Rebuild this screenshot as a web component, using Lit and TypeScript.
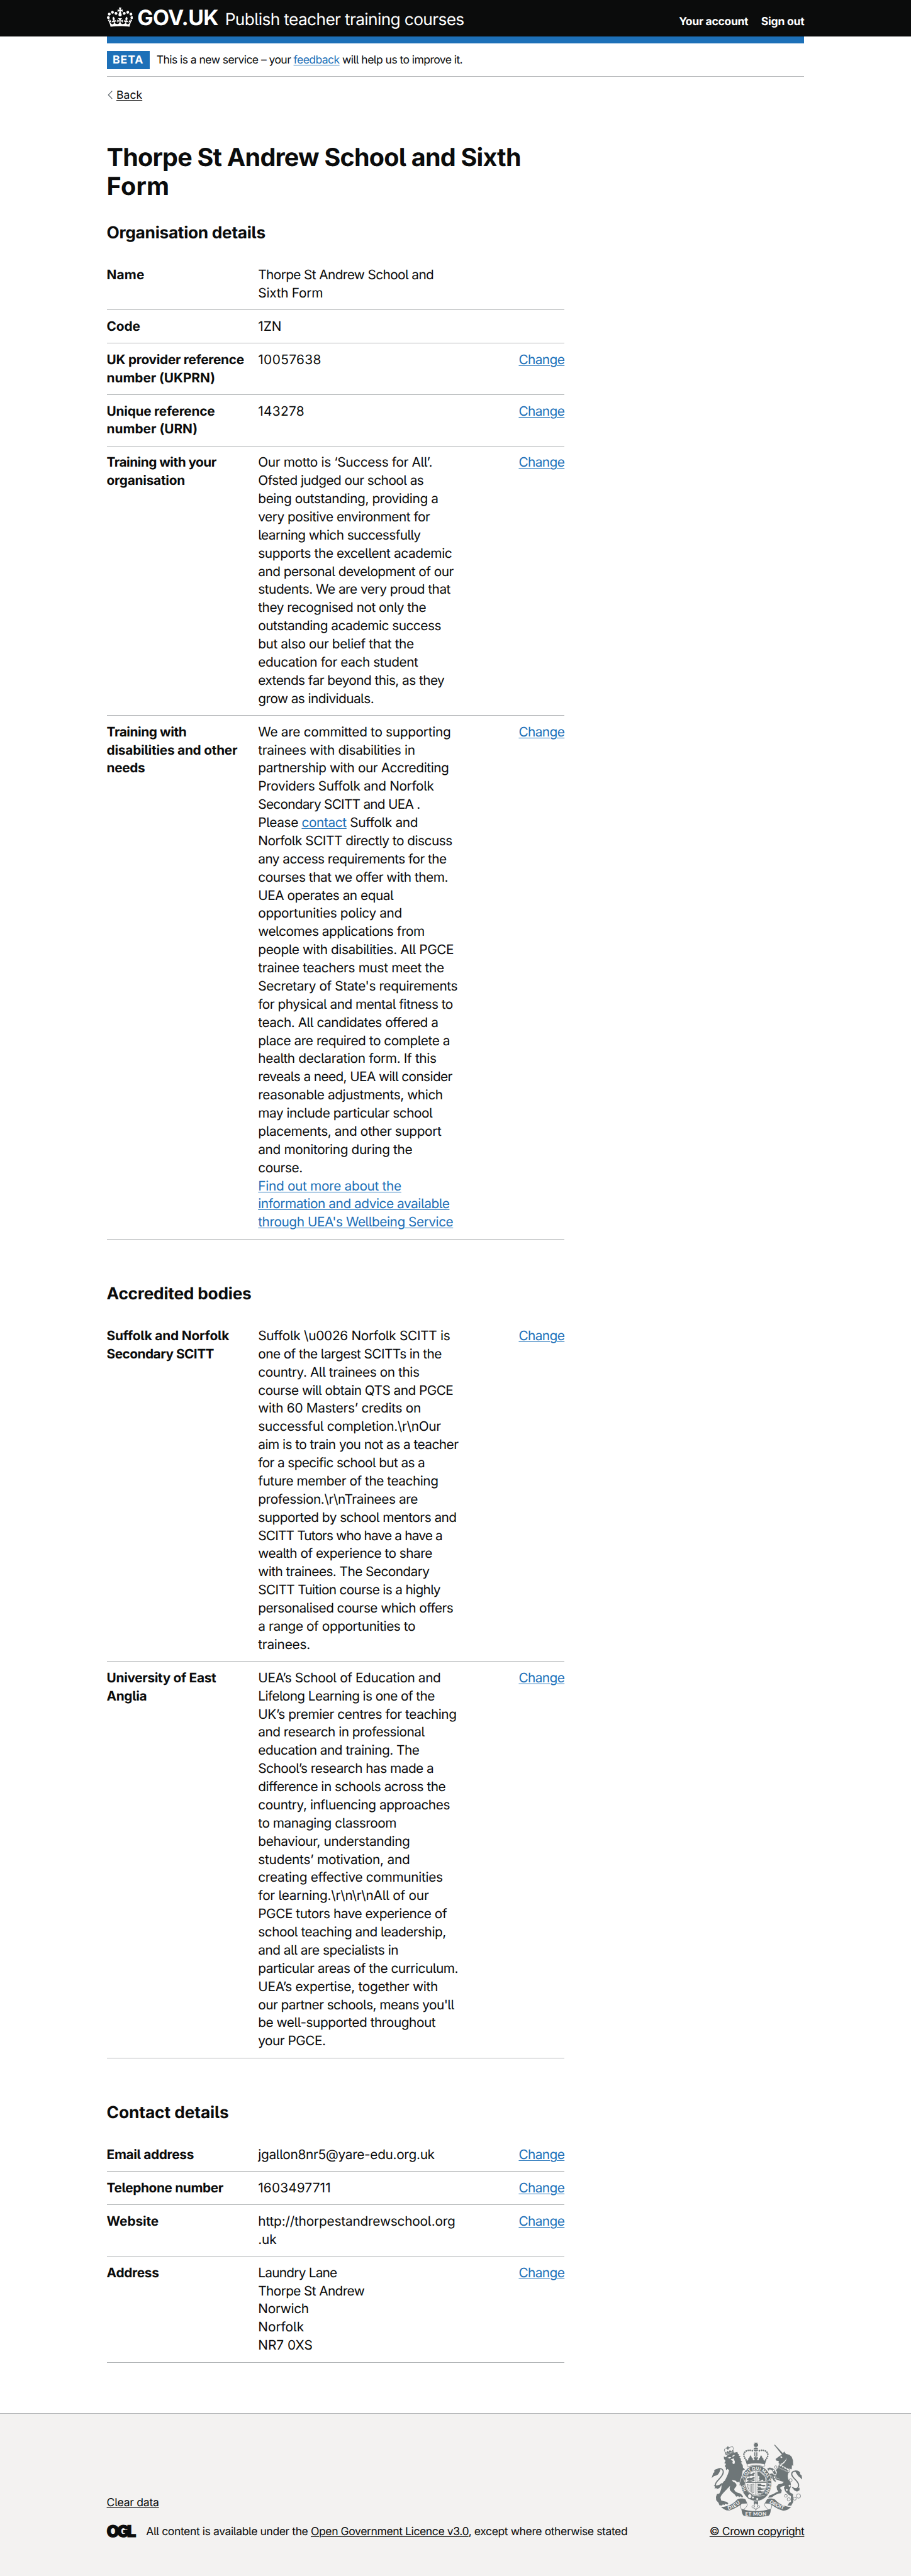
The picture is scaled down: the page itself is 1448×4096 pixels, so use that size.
import { LitElement, html, svg, css, unsafeCSS, TemplateResult } from "lit";
import { customElement, property, query } from "lit/decorators.js";

/** Pixels per layout unit: the page is designed on a 960-unit container. */
const SCALE = 1.155;
const u = (n: number) => unsafeCSS(`${+(n * SCALE).toFixed(3)}px`);

/** One line of text, tracked so that it spans the given number of units. */
@customElement("fit-text")
export class FitText extends LitElement {
  @property({ type: Number }) span = 0;
  @query("span") inner!: HTMLSpanElement;

  static styles = css`
    :host {
      display: block;
      white-space: pre;
    }
    .line {
      display: inline-block;
      vertical-align: top;
      white-space: pre;
    }
  `;

  firstUpdated() {
    const n = (this.textContent ?? "").length;
    const natural = this.inner.getBoundingClientRect().width;
    if (n > 1 && this.span) {
      const gap = ((this.span + 1.4) * SCALE - natural) / n;
      this.inner.style.letterSpacing = `${gap.toFixed(4)}px`;
    }
  }

  render() {
    return html`<span class="line"><slot></slot></span>`;
  }
}

type Line = [string | TemplateResult, number];
interface Row {
  key: Line[];
  value: Line[];
  change?: boolean;
}

const organisation: Row[] = [
  { key: [["Name", 50.4]], value: [["Thorpe St Andrew School and", 240.1], ["Sixth Form", 87.7]] },
  { key: [["Code", 44.5]], value: [["1ZN", 30.6]] },
  {
    key: [["UK provider reference", 187.6], ["number (UKPRN)", 147.8]],
    value: [["10057638", 85.6]],
    change: true,
  },
  {
    key: [["Unique reference", 147.3], ["number (URN)", 123.8]],
    value: [["143278", 62.5]],
    change: true,
  },
  {
    key: [["Training with your", 149.4], ["organisation", 106.2]],
    value: [
      ["Our motto is ‘Success for All’.", 238.4],
      ["Ofsted judged our school as", 226.3],
      ["being outstanding, providing a", 246.4],
      ["very positive environment for", 235.1],
      ["learning which successfully", 222.1],
      ["supports the excellent academic", 265.3],
      ["and personal development of our", 267.4],
      ["students. We are very proud that", 263.2],
      ["they recognised not only the", 229.6],
      ["outstanding academic success", 250.2],
      ["but also our belief that the", 212.8],
      ["education for each student", 218.7],
      ["extends far beyond this, as they", 254.8],
      ["grow as individuals.", 157.8],
    ],
    change: true,
  },
  {
    key: [["Training with", 108.3], ["disabilities and other", 178.4], ["needs", 51.2]],
    value: [
      ["We are committed to supporting", 263.6],
      ["trainees with disabilities in", 214.5],
      ["partnership with our Accrediting", 261.1],
      ["Providers Suffolk and Norfolk", 240.5],
      ["Secondary SCITT and UEA .", 221.2],
      [html`Please <a class="link">contact</a> Suffolk and`, 218.3],
      ["Norfolk SCITT directly to discuss", 265.7],
      ["any access requirements for the", 257.7],
      ["courses that we offer with them.", 259.8],
      ["UEA operates an equal", 184.7],
      ["opportunities policy and", 196.5],
      ["welcomes applications from", 227.5],
      ["people with disabilities. All PGCE", 267.8],
      ["trainee teachers must meet the", 254.4],
      ["Secretary of State's requirements", 272.9],
      ["for physical and mental fitness to", 266.6],
      ["teach. All candidates offered a", 246.4],
      ["place are required to complete a", 262.4],
      ["health declaration form. If this", 243.9],
      ["reveals a need, UEA will consider", 265.7],
      ["reasonable adjustments, which", 252.7],
      ["may include particular school", 238.4],
      ["placements, and other support", 250.6],
      ["and monitoring during the", 210.7],
      ["course.", 59.6],
      [html`<a class="link">Find out more about the</a>`, 195.6],
      [html`<a class="link">information and advice available</a>`, 261.9],
      [html`<a class="link">through UEA's Wellbeing Service</a>`, 267],
    ],
    change: true,
  },
];

const accredited: Row[] = [
  {
    key: [["Suffolk and Norfolk", 167.1], ["Secondary SCITT", 146.1]],
    value: [
      ["Suffolk \\u0026 Norfolk SCITT is", 262.8],
      ["one of the largest SCITTs in the", 251],
      ["country. All trainees on this", 220.4],
      ["course will obtain QTS and PGCE", 267],
      ["with 60 Masters’ credits on", 222.5],
      ["successful completion.\\r\\nOur", 250.2],
      ["aim is to train you not as a teacher", 274.1],
      ["for a specific school but as a", 227.9],
      ["future member of the teaching", 246.4],
      ["profession.\\r\\nTrainees are", 218.3],
      ["supported by school mentors and", 271.6],
      ["SCITT Tutors who have a have a", 251.9],
      ["wealth of experience to share", 238],
      ["with trainees. The Secondary", 234.2],
      ["SCITT Tuition course is a highly", 249.3],
      ["personalised course which offers", 267],
      ["a range of opportunities to", 214.9],
      ["trainees.", 70.1],
    ],
    change: true,
  },
  {
    key: [["University of East", 149], ["Anglia", 53.7]],
    value: [
      ["UEA’s School of Education and", 249.8],
      ["Lifelong Learning is one of the", 241.4],
      ["UK’s premier centres for teaching", 271.6],
      ["and research in professional", 227.5],
      ["education and training. The", 220.4],
      ["School’s research has made a", 240.1],
      ["difference in schools across the", 256.5],
      ["country, influencing approaches", 262.4],
      ["to managing classroom", 188.9],
      ["behaviour, understanding", 207.4],
      ["students’ motivation, and", 207.4],
      ["creating effective communities", 252.7],
      ["for learning.\\r\\n\\r\\nAll of our", 233.4],
      ["PGCE tutors have experience of", 258.2],
      ["school teaching and leadership,", 256.9],
      ["and all are specialists in", 191.4],
      ["particular areas of the curriculum.", 273.7],
      ["UEA’s expertise, together with", 246],
      ["our partner schools, means you'll", 268.2],
      ["be well-supported throughout", 242.6],
      ["your PGCE.", 91.5],
    ],
    change: true,
  },
];

const contact: Row[] = [
  { key: [["Email address", 118.4]], value: [["jgallon8nr5@yare-edu.org.uk", 241.4]], change: true },
  { key: [["Telephone number", 159.1]], value: [["1603497711", 98.6]], change: true },
  {
    key: [["Website", 70.1]],
    value: [["http://thorpestandrewschool.org", 269.9], [".uk", 23.9]],
    change: true,
  },
  {
    key: [["Address", 70.5]],
    value: [
      ["Laundry Lane", 107],
      ["Thorpe St Andrew", 144.8],
      ["Norwich", 68.4],
      ["Norfolk", 61.7],
      ["NR7 0XS", 73.5],
    ],
    change: true,
  },
];

const crown = svg`<path fill="currentColor" fill-rule="evenodd" d="M25 30.2c3.5 1.5 7.7-.2 9.1-3.7 1.5-3.6-.2-7.8-3.9-9.2-3.6-1.4-7.6.3-9.1 3.9-1.4 3.5.3 7.5 3.9 9zM9 39.5c3.6 1.5 7.8-.2 9.2-3.7 1.5-3.6-.2-7.8-3.9-9.1-3.6-1.5-7.6.2-9.1 3.8-1.4 3.5.3 7.5 3.8 9zM4.4 57.2c3.5 1.5 7.7-.2 9.1-3.8 1.5-3.6-.2-7.7-3.9-9.1-3.5-1.5-7.6.3-9.1 3.8-1.4 3.5.3 7.6 3.9 9.1zm38.3-21.4c3.5 1.5 7.7-.2 9.1-3.8 1.5-3.6-.2-7.7-3.9-9.1-3.6-1.5-7.6.3-9.1 3.8-1.3 3.6.4 7.7 3.9 9.1zm64.4-5.6c-3.6 1.5-7.8-.2-9.1-3.7-1.5-3.6.2-7.8 3.8-9.2 3.6-1.4 7.7.3 9.2 3.9 1.3 3.5-.4 7.5-3.9 9zm15.9 9.3c-3.6 1.5-7.7-.2-9.1-3.7-1.5-3.6.2-7.8 3.7-9.1 3.6-1.5 7.7.2 9.2 3.8 1.5 3.5-.3 7.5-3.8 9zm4.7 17.7c-3.6 1.5-7.8-.2-9.2-3.8-1.5-3.6.2-7.7 3.9-9.1 3.6-1.5 7.7.3 9.2 3.8 1.3 3.5-.4 7.6-3.9 9.1zM89.3 35.8c-3.6 1.5-7.8-.2-9.2-3.8-1.4-3.6.2-7.7 3.9-9.1 3.6-1.5 7.7.3 9.2 3.8 1.4 3.6-.3 7.7-3.9 9.1zM69.7 17.7l8.9 4.7V9.3l-8.9 2.8c-.2-.3-.5-.6-.9-.9L72.4 0H59.6l3.5 11.2c-.3.3-.6.5-.9.9l-8.8-2.8v13.1l8.8-4.7c.3.3.6.7.9.9l-5 15.4v.1c-.2.8-.4 1.6-.4 2.4 0 4.1 3.1 7.5 7 8.1h.2c.3 0 .7.1 1 .1.4 0 .7 0 1-.1h.2c4-.6 7.1-4.1 7.1-8.1 0-.8-.1-1.7-.4-2.4V34l-5.1-15.4c.4-.2.7-.6 1-.9zM66 92.8c16.9 0 32.8 1.1 47.1 3.2 4-16.9 8.9-26.7 14-33.5l-9.6-3.4c1 4.9 1.1 7.2 0 10.2-1.5-1.4-3-4.3-4.2-8.7L108.6 76c2.8-2 5-3.2 7.5-3.3-4.4 9.4-10 11.9-13.6 11.2-4.3-.8-6.3-4.6-5.6-7.9 1-4.7 5.7-5.9 8-.5 4.3-8.7-3-11.4-7.6-8.8 7.1-7.2 7.9-13.5 2.1-21.1-8 6.1-8.1 12.3-4.5 20.8-4.7-5.4-12.1-2.5-9.5 6.2 3.4-5.2 7.9-2 7.2 3.1-.6 4.3-6.4 7.8-13.5 7.2-10.3-.9-10.9-8-11.2-13.8 2.5-.5 7.1 1.8 11 7.3L80.2 60c-4.1 4.4-8 5.3-12.3 5.4 1.4-4.4 8-11.6 8-11.6H55.5s6.4 7.2 7.9 11.6c-4.2-.1-8-1-12.3-5.4l1.4 16.4c3.9-5.5 8.5-7.7 10.9-7.3-.3 5.8-.9 12.8-11.1 13.8-7.2.6-12.9-2.9-13.5-7.2-.7-5 3.8-8.3 7.1-3.1 2.7-8.7-4.6-11.6-9.4-6.2 3.7-8.5 3.6-14.7-4.6-20.8-5.8 7.6-5 13.9 2.2 21.1-4.7-2.6-11.9.1-7.7 8.8 2.3-5.5 7.1-4.2 8.1.5.7 3.3-1.3 7.1-5.7 7.9-3.5.7-9-1.8-13.5-11.2 2.5.1 4.7 1.3 7.5 3.3l-4.7-15.4c-1.2 4.4-2.7 7.2-4.3 8.7-1.1-3-.9-5.3 0-10.2l-9.5 3.4c5 6.9 9.9 16.7 14 33.5 14.8-2.1 30.8-3.2 47.7-3.2z"/>`;

/** Royal coat of arms: lion, garter and shield, unicorn, motto ribbon. */
@customElement("royal-arms")
export class RoyalArms extends LitElement {
  static styles = css`
    :host {
      display: block;
      color: #6e7678;
    }
    .arms {
      display: block;
      width: 100%;
      height: 100%;
    }
    .f { fill: currentColor; }
    .b { fill: #f3f2f1; }
    .s { fill: none; stroke: currentColor; }
    .path { fill: none; stroke: none; }
    .o { fill: #f3f2f1; stroke: currentColor; stroke-width: 4; }
    .e { fill: currentColor; stroke: #f3f2f1; stroke-width: 4; }
    .bs { fill: none; stroke: #f3f2f1; }
    .dots { fill: none; stroke: currentColor; stroke-linecap: round; }
    .motto {
      fill: #f3f2f1;
      font-family: Lato, "Liberation Sans", sans-serif;
      font-weight: 900;
      font-size: 40px;
    }
    .ring { font-size: 33px; }
  `;

  render() {
    return html`<svg class="arms" viewBox="162 122 718 590" role="img">
      <!-- ribbon -->
      <path class="f" d="M236 632 C300 628 336 604 362 574 C384 562 412 562 430 572 L443 600 C418 602 404 606 392 616 C366 632 340 646 312 656 C284 666 262 654 236 632Z"/>
      <path class="f" d="M792 632 C730 628 692 604 666 574 C644 562 616 562 600 572 L584 600 C610 602 626 606 636 616 C662 634 690 650 718 658 C746 666 768 654 792 632Z"/>
      <path class="o" d="M400 652 C384 632 388 610 404 604 L440 602 C450 616 440 628 422 646 L418 655Z"/>
      <path class="o" d="M628 652 C642 632 640 610 624 604 L584 602 C576 616 584 628 602 644 L610 655Z"/>
      <path class="f" d="M398 646 C470 670 556 670 630 646 C630 676 624 692 612 702 C550 714 476 714 418 702 C406 692 400 676 398 646Z"/>
      <path id="dieu" class="path" d="M296 656 Q352 636 396 596"/>
      <path id="droit" class="path" d="M618 596 Q670 634 746 658"/>
      <text class="motto"><textPath href="#dieu" textLength="108">DIEU</textPath></text>
      <text class="motto"><textPath href="#droit" textLength="126">DROIT</textPath></text>
      <text class="motto" x="428" y="700" textLength="168">ET MON</text>
      <!-- pendant lily -->
      <path class="f" d="M496 586H530V612H496Z"/>
      <path class="o" d="M512 600 C526 612 526 622 521 632 C530 618 544 618 543 632 C540 642 532 640 530 636 C530 648 522 644 519 642 L512 660 L505 642 C502 644 494 648 494 636 C492 640 484 642 481 632 C480 618 494 618 503 632 C498 622 498 612 512 600Z"/>
      <!-- lion tail -->
      <path class="s" stroke-width="9" d="M246 444 C206 476 184 476 194 446 C206 416 250 396 254 356 C254 326 226 320 206 336"/>
      <path class="f" d="M232 332 C212 324 192 330 182 342 L184 356 L174 362 L162 402 L180 388 L204 380 C218 370 226 356 232 332Z M178 458 L200 462 L226 456 L248 450 L222 482 L200 492 L204 482 L184 484 L190 474Z"/>
      <!-- lion -->
      <path class="f" d="M258 232 L276 238 L284 224 L300 214 L330 203 L366 196 L370 210 L380 216 L376 224 L392 232 L382 240 L396 252 L390 258 L404 276 L394 280 L408 300 L410 320 L426 334 L408 344 L403 372 L398 392 L412 408 L426 440 L422 466 L408 456 L396 464 L382 458 L384 444 L376 432 L364 436 L352 424 L322 416 L330 430 C350 438 362 450 358 466 L340 490 L346 506 L366 518 L388 524 L402 536 L412 552 L402 556 L386 546 L382 556 L372 546 L356 550 L346 534 L324 516 L308 500 L304 484 L308 464 C298 476 280 494 262 512 C246 528 234 544 232 558 L238 580 L258 586 L280 590 L294 602 L288 612 L266 606 L266 616 L250 612 L244 620 L224 618 L216 598 L198 578 L196 552 L204 530 L222 526 C234 504 240 486 240 468 C242 448 256 430 266 424 C276 404 290 380 300 340 L288 330 L276 340 L274 318 L266 308 L276 290 L262 284 L272 266 L260 250Z"/>
      <path class="b" d="M286 242 L306 236 L318 238 L304 248Z M322 228 L342 218 L344 226 L330 234Z M312 254 L338 246 L340 258 L346 272 L344 288 L334 292 L326 284 L330 268 L322 262Z"/>
      <!-- lion's crown -->
      <path class="f" d="M266 196 L280 200 L286 186 L296 196 L306 180 L318 190 L332 176 L338 200 L274 220Z"/>
      <path class="bs" stroke-width="3" d="M276 210 L334 194"/>
      <path class="dots" stroke-width="7" stroke-dasharray="0 9" d="M266 192 C256 170 276 158 288 170 C296 160 330 146 334 162 L334 174"/>
      <path class="f" d="M286 152h9v8h7v8h-7v9h-9v-9h-7v-8h7Z"/>
      <!-- unicorn -->
      <path class="f" d="M655 138 L664 140 L732 212 L722 222Z"/>
      <path class="f" d="M668 252 L700 228 L722 216 L736 192 L750 210 L778 218 L796 234 L806 262 L808 306 L798 300 L796 334 L786 330 L742 320 L712 302 L736 284 L752 262 L756 240 L746 262 L722 284 L706 292 L692 284 L694 268 L674 264Z"/>
      <path class="b" d="M704 234 l14 -4 l4 10 l-10 4Z"/>
      <path class="o" d="M698 290 L784 336 L774 360 L690 318Z"/>
      <path class="f" d="M700 298 l8 14 l8 -8 l10 18 l8 -8 l10 18 l8 -8 l10 18 l8 -6 l0 16 L692 316Z"/>
      <path class="f" d="M688 320 L770 360 L764 386 L768 410 L788 440 L790 470 L778 500 L782 516 L806 530 L808 592 L792 622 L762 620 L776 598 L790 590 L790 546 L768 532 L744 506 L734 480 L744 464 C726 466 708 472 704 482 L718 500 L712 522 L690 526 L662 538 L638 556 L608 558 L620 540 L650 530 L666 520 L690 508 L680 494 L676 470 L690 452 L720 446 L734 434 L708 426 L664 410 L640 408 L618 388 L618 368 L642 368 L672 378 L680 354 L670 340Z"/>
      <path class="bs" stroke-width="3" d="M664 412 L672 400 L700 412"/>
      <!-- unicorn tail -->
      <path class="s" stroke-width="9" d="M800 476 C832 500 856 480 850 450 C836 414 796 400 796 370 C798 346 822 344 842 352"/>
      <path class="f" d="M820 344 C840 338 856 346 864 362 L860 370 L874 380 L880 414 L860 396 C844 386 838 372 820 344Z M806 484 L836 486 L858 478 L858 500 L838 510 L816 500Z"/>
      <!-- garter and shield -->
      <ellipse class="e" cx="515" cy="443" rx="122" ry="142"/>
      <ellipse class="b" cx="514" cy="440" rx="89" ry="102"/>
      <ellipse class="s" stroke-width="4" cx="514" cy="440" rx="85" ry="98"/>
      <path class="s" stroke-width="5" d="M513 342V538M430 438H598"/>
      <path class="f" d="M446 384 l20 -20 l8 10 l24 -18 l8 12 l-12 6 l10 4 l-12 8 l-18 -2 l-12 6 l-18 0Z M440 408 l20 -10 l14 4 l26 -10 l4 12 l-14 4 l12 4 l-24 4 l-24 2 l-14 0Z M438 432 l22 -14 l16 4 l24 -8 l2 12 l-20 2 l-10 6Z"/>
      <path class="f" d="M526 354 l20 4 l16 14 l22 20 l2 34 l-12 2 l-8 -14 l-20 12 l-16 -6 l14 -8 l-12 -8 l12 -10 l-16 -12Z"/>
      <path class="s" stroke-width="3" d="M522 430 V352 C556 354 588 390 590 430Z"/>
      <path class="f" d="M522 448 h28 l8 8 h26 l4 8 l-10 6 l-20 -4 l-36 2 l8 -8Z M522 476 h28 l8 8 h26 l-2 8 l-26 4 l-34 0 l8 -8Z M522 502 h26 l8 6 h14 l-6 12 l-42 4 l8 -8Z"/>
      <path class="o" d="M444 452 C462 466 478 450 496 450 V516 L488 522 C466 508 448 490 444 452Z"/>
      <path class="s" stroke-width="3" d="M458 462V492M468 462V504M478 458V512M487 456V518"/>
      <path id="ring" class="path" d="M437 502 A93 107 0 1 1 580 520"/>
      <text class="motto ring"><textPath href="#ring" textLength="478">HONI SOIT QUI MAL Y PENSE</textPath></text>
      <path class="e" d="M396 470 C388 456 380 452 384 438 L400 392 L414 408 L428 440 L424 468 L412 458 L404 474Z"/>
      <ellipse class="o" cx="464" cy="546" rx="17" ry="19" style="stroke-width:7"/>
      <circle class="b" cx="489" cy="556" r="8"/><circle class="b" cx="523" cy="568" r="8"/>
      <path class="bs" stroke-width="4" d="M484 534 C510 546 550 550 582 538"/>
      <!-- unicorn forelegs and chain -->
      <path class="e" style="stroke-width:3" d="M600 328 L620 318 L646 324 L664 340 L676 370 L656 376 L640 342 L622 334 L614 348Z M614 372 L640 388 L648 420 L668 436 L672 426 L660 410 L672 400 L668 384 L640 364Z"/>
      <g class="o">
        <circle cx="750" cy="543" r="11"/><circle cx="773" cy="571" r="13"/><circle cx="820" cy="566" r="12"/>
        <circle cx="850" cy="545" r="17"/><circle cx="788" cy="420" r="12"/><circle cx="670" cy="315" r="10"/>
        <circle cx="652" cy="342" r="8"/><circle cx="660" cy="395" r="9"/>
      </g>
      <circle class="b" cx="757" cy="497" r="7"/><circle class="b" cx="780" cy="463" r="8"/>
      <!-- crown -->
      <path class="f" d="M498 122H528L520 134L530 130V150L520 146L526 156H498L504 146L496 150V130L506 134Z"/>
      <path class="f" d="M494 176 C494 154 530 154 530 176Z M494 180 H530 C528 196 496 196 494 180Z M500 198h8v30h-8Z M516 198h8v30h-8Z"/>
      <path class="dots" stroke-width="13" stroke-dasharray="0 16.2" d="M484 186 C440 172 410 200 418 228 C422 244 430 250 436 262"/>
      <path class="dots" stroke-width="13" stroke-dasharray="0 16.2" d="M540 186 C584 172 614 200 606 228 C602 244 594 250 588 262"/>
      <path class="f" d="M426 248 C434 268 446 268 452 256 C450 244 456 240 460 246 C460 234 466 228 470 220 C474 228 480 234 480 246 C484 240 490 244 488 256 C492 264 500 262 504 250 L496 254 V234 L508 240 L504 230 H520 L516 240 L528 234 V254 L520 250 C524 262 532 264 536 256 C534 244 540 240 544 246 C544 234 550 228 554 220 C558 228 564 234 564 246 C568 240 574 244 572 256 C578 268 590 268 598 248 L584 294 C540 284 484 284 440 294Z"/>
      <path class="o" d="M448 290 C490 282 536 282 578 290 C586 300 586 306 576 314 C540 298 486 298 450 314 C440 306 440 298 448 290Z"/>
    </svg>`;
  }
}

@customElement("app-root")
export class AppRoot extends LitElement {
  static styles = css`
    :host {
      display: block;
      background: #fff;
      color: #0b0c0c;
      font-family: Inter, "Noto Sans", "Liberation Sans", sans-serif;
      font-feature-settings: "cv05" 1, "calt" 0;
      font-size: ${u(18.05)};
      line-height: ${u(25)};
      text-rendering: geometricPrecision;
    }
    .page {
      display: flex;
      flex-direction: column;
      min-height: 4096px;
    }
    .container {
      width: ${u(960)};
      margin: 0 auto;
    }
    h1, h2, dl, dt, dd { margin: 0; }

    .link, .plain {
      color: #1d70b8;
      text-decoration: underline;
      text-decoration-thickness: ${u(1.15)};
      text-underline-offset: ${u(1.4)};
    }
    .plain { color: #0b0c0c; }

    .header {
      background: #0b0c0c;
      color: #fff;
      height: ${u(50)};
    }
    .bar {
      display: flex;
      align-items: baseline;
      height: ${u(50)};
      padding-top: ${u(10.4)};
      box-sizing: border-box;
    }
    .crown {
      align-self: flex-start;
      width: ${u(36.2)};
      height: ${u(26.6)};
    }
    .logotype {
      width: ${u(119.5)};
      margin-left: ${u(6)};
      font-size: ${u(29.2)};
      line-height: ${u(30)};
      font-weight: 700;
    }
    .service {
      flex: 1;
      margin-left: ${u(1.2)};
      font-size: ${u(22.8)};
      line-height: ${u(30)};
    }
    .nav {
      display: flex;
      gap: ${u(17.8)};
      font-size: ${u(15.2)};
      line-height: ${u(20)};
      font-weight: 700;
    }
    .stripe {
      height: ${u(10)};
      background: #1d70b8;
    }
    .banner {
      display: flex;
      padding: ${u(10)} 0;
      border-bottom: ${u(1)} solid #b1b4b6;
      font-size: ${u(15.2)};
    }
    .banner fit-text { margin: ${u(0.8)} 0 ${u(-0.8)}; }
    .tag {
      width: ${u(59)};
      margin-right: ${u(9.6)};
      display: flex;
      justify-content: center;
      background: #1d70b8;
      color: #fff;
      font-weight: 700;
    }
    .back {
      display: flex;
      align-items: center;
      margin-top: ${u(15)};
      font-size: ${u(15.2)};
      line-height: ${u(20)};
    }
    .chevron {
      width: ${u(8)};
      height: ${u(12)};
      margin-right: ${u(5.3)};
    }
    .main {
      width: ${u(630)};
      padding-bottom: ${u(69.3)};
    }
    .title {
      margin-top: ${u(55.5)};
      margin-bottom: ${u(-0.44)};
      font-size: ${u(34.2)};
      line-height: ${u(40)};
      font-weight: 700;
    }
    .heading {
      margin: ${u(60.2)} 0 ${u(20.4)};
      font-size: ${u(22.8)};
      line-height: ${u(30)};
      font-weight: 700;
    }
    .title + section .heading { margin-top: ${u(29.85)}; }
    .item {
      display: grid;
      grid-template-columns: ${u(208.4)} 1fr auto;
      padding: ${u(10.9)} 0 ${u(9.1)};
      border-bottom: ${u(1)} solid #b1b4b6;
    }
    .key { font-weight: 700; }

    .footer {
      flex: 1;
      border-top: ${u(1)} solid #b1b4b6;
      background: #f3f2f1;
      font-size: ${u(15.2)};
      line-height: ${u(20)};
    }
    .meta {
      display: flex;
      justify-content: space-between;
      align-items: flex-end;
      padding-top: ${u(40.2)};
    }
    .licence {
      display: flex;
      margin-top: ${u(20.1)};
    }
    .ogl {
      width: ${u(54.2)};
      font-size: ${u(22.4)};
      font-weight: 900;
      letter-spacing: ${u(-3.2)};
      -webkit-text-stroke: ${u(0.9)} #0b0c0c;
    }
    .arms {
      width: ${u(125)};
      height: ${u(102.5)};
      margin: 0 auto ${u(10.4)};
    }
  `;

  private lines(list: Line[]) {
    return list.map(([text, span]) => html`<fit-text span=${span}>${text}</fit-text>`);
  }

  private section(title: string, span: number, rows: Row[]) {
    return html`<section>
      <h2 class="heading"><fit-text span=${span}>${title}</fit-text></h2>
      <dl>
        ${rows.map(
          (r) => html`<div class="item">
            <dt class="key">${this.lines(r.key)}</dt>
            <dd>${this.lines(r.value)}</dd>
            <dd>${r.change ? html`<fit-text span="61.6"><a class="link">Change</a></fit-text>` : ""}</dd>
          </div>`
        )}
      </dl>
    </section>`;
  }

  render() {
    return html`<div class="page">
      <header class="header">
        <div class="container bar">
          <svg class="crown" viewBox="0 0 132 97">${crown}</svg>
          <fit-text class="logotype" span="110">GOV.UK</fit-text>
          <fit-text class="service" span="327.5">Publish teacher training courses</fit-text>
          <nav class="nav">
            <fit-text span="93.8">Your account</fit-text>
            <fit-text span="58">Sign out</fit-text>
          </nav>
        </div>
      </header>
      <div class="container">
        <div class="stripe"></div>
        <div class="banner">
          <strong class="tag"><fit-text span="41.5">BETA</fit-text></strong>
          <fit-text span="419.6">This is a new service – your <a class="link">feedback</a> will help us to improve it.</fit-text>
        </div>
        <div class="back">
          <svg class="chevron" viewBox="0 0 8 12"><path d="M7.2 .6L2 6L7.2 11.4" fill="none" stroke="#505a5f" stroke-width="1"/></svg>
          <fit-text span="34.3"><a class="plain">Back</a></fit-text>
        </div>
        <main class="main">
          <h1 class="title">
            <fit-text span="568.4">Thorpe St Andrew School and Sixth</fit-text>
            <fit-text span="85">Form</fit-text>
          </h1>
          ${this.section("Organisation details", 217, organisation)}
          ${this.section("Accredited bodies", 197.7, accredited)}
          ${this.section("Contact details", 166.7, contact)}
        </main>
      </div>
      <footer class="footer">
        <div class="container meta">
          <div>
            <fit-text span="70.5"><a class="plain">Clear data</a></fit-text>
            <div class="licence">
              <span class="ogl">OGL</span>
              <fit-text span="661">All content is available under the <a class="plain">Open Government Licence v3.0</a>, except where otherwise stated</fit-text>
            </div>
          </div>
          <div>
            <royal-arms class="arms"></royal-arms>
            <fit-text span="129"><a class="plain">© Crown copyright</a></fit-text>
          </div>
        </div>
      </footer>
    </div>`;
  }
}
